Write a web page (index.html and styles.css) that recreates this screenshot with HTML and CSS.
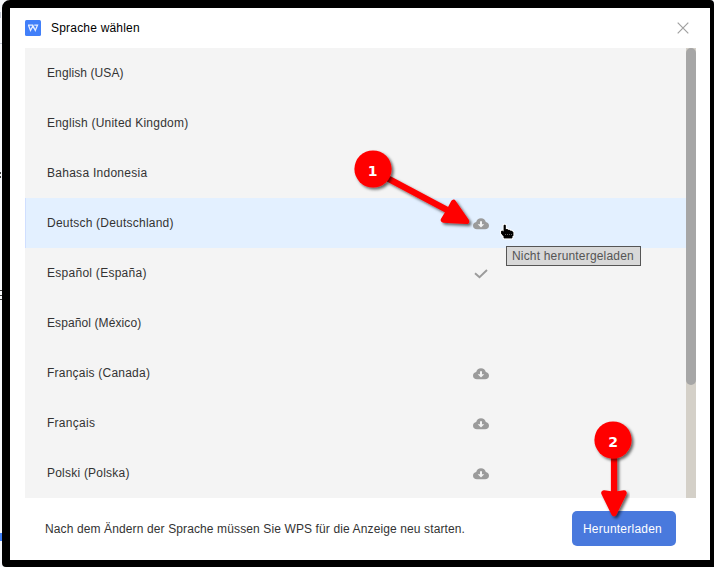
FILE: index.html
```html
<!DOCTYPE html>
<html lang="de">
<head>
<meta charset="utf-8">
<title>Sprache wählen</title>
<link rel="stylesheet" href="styles.css">
</head>
<body>
<svg class="defs" width="0" height="0" aria-hidden="true">
  <symbol id="cloud" viewBox="0 0 16 12">
    <path fill="#9b9b9b" d="M4 11.200C1.600 11.200 0 9.800 0 7.800 0 5.800 1.300 4.400 3.200 4.100 3.700 1.600 5.500.2 8 .2s4.300 1.400 4.800 3.900c1.900.3 3.200 1.700 3.200 3.700 0 2-1.600 3.400-4 3.400z"/>
    <path fill="#f4f4f4" d="M7 3.200h2v3h2.300L8 9.600 4.700 6.200H7z"/>
  </symbol>
</svg>
<div class="dialog">
  <header class="titlebar">
    <svg class="logo" width="16" height="16" viewBox="0 0 16 16"><rect width="16" height="16" rx="1.500" fill="#417ff9"/><path d="M3 5.200h4.500l1.300 3M3.500 5.200l2 5.300L8 5.700l2.300 4.800 2.200-5.300H9.300" fill="none" stroke="#e5edff" stroke-width="1.300"/></svg>
    <h1 class="title">Sprache wählen</h1>
    <svg class="close" width="12" height="12" viewBox="0 0 12 12"><path d="M.7.700l10.600 10.600M11.300.7L.7 11.300" stroke="#a0a0a0" stroke-width="1.200"/></svg>
  </header>
  <div class="list">
    <ul class="rows">
      <li class="narrow">English (USA)</li>
      <li>English (United Kingdom)</li>
      <li class="wide">Bahasa Indonesia</li>
      <li class="selected"><span>Deutsch (Deutschland)</span><svg class="state"><use href="#cloud"/></svg></li>
      <li class="wide"><span>Español (España)</span><svg class="state" viewBox="0 0 16 12"><path d="M2 5.200l4.500 4.100L14 2" fill="none" stroke="#9b9b9b" stroke-width="1.900"/></svg></li>
      <li class="narrow">Español (México)</li>
      <li><span>Français (Canada)</span><svg class="state"><use href="#cloud"/></svg></li>
      <li class="wide"><span>Français</span><svg class="state"><use href="#cloud"/></svg></li>
      <li><span>Polski (Polska)</span><svg class="state"><use href="#cloud"/></svg></li>
    </ul>
    <div class="track"><div class="thumb"></div></div>
  </div>
  <footer class="footer">
    <p class="note">Nach dem Ändern der Sprache müssen Sie WPS für die Anzeige neu starten.</p>
    <button class="download">Herunterladen</button>
  </footer>
</div>
<div class="tooltip">Nicht heruntergeladen</div>
<svg class="marks" width="714" height="567" viewBox="0 0 714 567">
  <defs><filter id="shadow" x="-20%" y="-20%" width="150%" height="150%"><feDropShadow dx="2" dy="2" stdDeviation="1.500" flood-color="#000" flood-opacity=".6"/></filter></defs>
  <path d="M0 172h1v2H0zM0 176h1v2H0zM0 290h2v1H0zM0 295h2v1H0zM0 299h2v1H0z" fill="#444"/>
  <path d="M0 12h1v6H0zM0 43h2v1H0z" fill="#c5cad6"/>
  <path d="M504 225.200h1.300v4.300h2.200v.8h2.200v.8h2l1.300 1.400v3l-1 1v1.500h-8v-1.500l-2.500-3v-2.300h1.300l1.200 1z" fill="#000" stroke="#fff" stroke-width="2.800" stroke-linejoin="round" paint-order="stroke"/>
  <path d="M504 225.200h1.300v4.300h2.200v.8h2.200v.8h2l1.300 1.400v3l-1 1v1.500h-8v-1.500l-2.500-3v-2.300h1.300l1.200 1z" fill="#000" stroke="#000" stroke-width=".8"/>
  <path d="M505 234.500h7" stroke="#777" stroke-width=".8" stroke-dasharray="1 1"/>
  <g filter="url(#shadow)" fill="#f00" stroke="#f00" stroke-linejoin="round">
    <path d="M388 178.500L450 211.500" stroke-width="6.500"/>
    <path d="M453.500 202.500l-4.500 8.500-5.500 9 23 1.300z" stroke-width="5.500"/>
  </g>
  <circle cx="373" cy="169" r="18.600" fill="#f00" filter="url(#shadow)"/>
  <g filter="url(#shadow)" fill="#f00" stroke="#f00" stroke-linejoin="round">
    <path d="M614 456v40" stroke-width="6.200"/>
    <path d="M604 493l10 1.500 10-1.500-10 20.500z" stroke-width="5.500"/>
  </g>
  <circle cx="613" cy="440" r="18.600" fill="#f00" filter="url(#shadow)"/>
  <text class="num" x="372.500" y="175.500">1</text>
  <text class="num" x="613" y="446.500">2</text>
</svg>
</body>
</html>
```
FILE: styles.css
```css
* { box-sizing: border-box; }
body {
  margin: 0;
  width: 714px;
  height: 567px;
  padding-left: 2px;
  overflow: hidden;
  background: linear-gradient(#4080f8, #4080f8) 0 533px / 2px 8px no-repeat, #f7f8fb;
  font: 12px/16px "Liberation Sans", Arial, sans-serif;
  color: #333;
}
.defs { position: absolute; }
.dialog {
  width: 712px;
  height: 567px;
  border: 8px solid #000;
  border-width: 8px 4px 7px 8px;
  border-radius: 8px 4px 0 4px;
  background: linear-gradient(#fff, #fff) padding-box, #000;
  padding: 0 14px 0 15px;
}
.titlebar { display: flex; align-items: center; height: 40px; }
.title { margin: 0 auto 0 10px; font-size: 12px; font-weight: 400; color: #000; letter-spacing: .2px; }
.close { margin-right: 7px; }
.list { display: flex; height: 450px; }
.rows { flex: 1; margin: 0; padding: 0; list-style: none; background: #f4f4f4; }
.rows li { display: flex; align-items: center; justify-content: space-between; height: 50px; padding: 0 197px 0 22px; letter-spacing: .22px; }
.rows .narrow { letter-spacing: .1px; }
.rows .wide { letter-spacing: .27px; }
.rows .selected { background: #e3f0ff; box-shadow: inset 1px 0 #d0dfff; }
.state { width: 16px; height: 12px; margin-top: 2px; }
.track { width: 10px; background: #d4d0c8; }
.thumb { height: 337px; border-radius: 5px; background: #a6a6a6; }
.footer { display: flex; align-items: center; justify-content: space-between; height: 61px; padding: 0 20px; }
.note { margin: 0; letter-spacing: .12px; white-space: nowrap; }
.download { width: 104px; height: 35px; padding: 0 3px 0 0; border: 0; border-radius: 5px; background: #4979dd; color: #fff; font: inherit; letter-spacing: .23px; }
.tooltip {
  position: absolute;
  left: 506px;
  top: 246px;
  width: 135px;
  height: 20px;
  padding: 1px 5px;
  border: 1px solid #555;
  background: #d8d8d8;
  color: #555;
  letter-spacing: .18px;
  white-space: nowrap;
}
.marks { position: absolute; left: 0; top: 0; }
.num { fill: #fff; font: 700 14px "DejaVu Sans", sans-serif; text-anchor: middle; }
```
